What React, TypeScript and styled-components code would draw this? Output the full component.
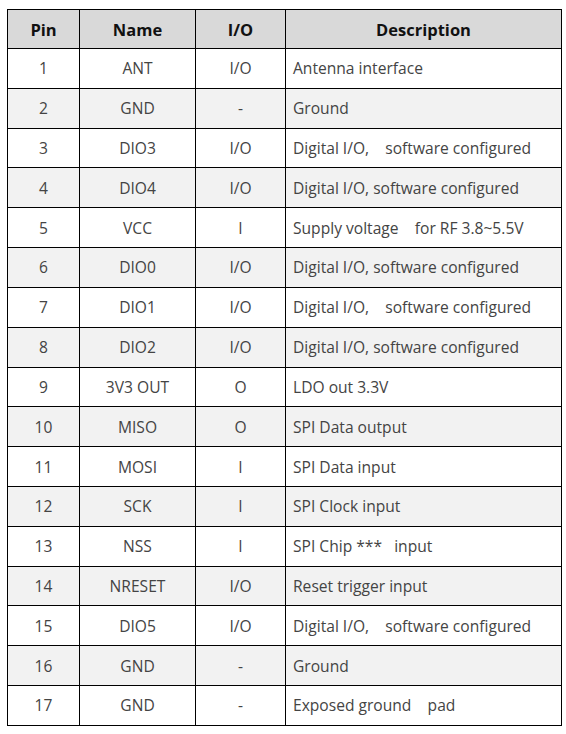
import styled, { createGlobalStyle } from 'styled-components';

const GlobalStyle = createGlobalStyle`
  body {
    margin: 0;
    padding: 9px 0 0 7px;
    background: #ffffff;
    font-family: 'Open Sans', 'Noto Sans', 'Liberation Sans', sans-serif;
  }
`;

const PinTable = styled.table`
  width: 555px;
  border-collapse: collapse;
  table-layout: fixed;
  font-size: 15.6px;
  color: #444444;
`;

const HeadCell = styled.th<{ $width?: number }>`
  ${({ $width }) => ($width ? `width: ${$width}px;` : '')}
  height: 38px;
  padding: 0;
  border: 1px solid #000000;
  background: #d9d9d9;
  color: #111111;
  font-size: 16.5px;
  font-weight: 700;
  text-align: center;
  vertical-align: middle;
`;

const Row = styled.tr<{ $shaded: boolean }>`
  height: 39.82px;
  background: ${({ $shaded }) => ($shaded ? '#f2f2f2' : '#ffffff')};
`;

const Cell = styled.td<{ $left?: boolean }>`
  padding: ${({ $left }) => ($left ? '0 0 0 7px' : '0')};
  border: 1px solid #000000;
  text-align: ${({ $left }) => ($left ? 'left' : 'center')};
  vertical-align: middle;
  white-space: pre;
`;

interface IPin {
  pin: number;
  name: string;
  io: string;
  desc: string;
}

const pins: IPin[] = [
  { pin: 1, name: 'ANT', io: 'I/O', desc: 'Antenna interface' },
  { pin: 2, name: 'GND', io: '-', desc: 'Ground' },
  { pin: 3, name: 'DIO3', io: 'I/O', desc: 'Digital I/O,    software configured' },
  { pin: 4, name: 'DIO4', io: 'I/O', desc: 'Digital I/O, software configured' },
  { pin: 5, name: 'VCC', io: 'I', desc: 'Supply voltage    for RF 3.8~5.5V' },
  { pin: 6, name: 'DIO0', io: 'I/O', desc: 'Digital I/O, software configured' },
  { pin: 7, name: 'DIO1', io: 'I/O', desc: 'Digital I/O,    software configured' },
  { pin: 8, name: 'DIO2', io: 'I/O', desc: 'Digital I/O, software configured' },
  { pin: 9, name: '3V3 OUT', io: 'O', desc: 'LDO out 3.3V' },
  { pin: 10, name: 'MISO', io: 'O', desc: 'SPI Data output' },
  { pin: 11, name: 'MOSI', io: 'I', desc: 'SPI Data input' },
  { pin: 12, name: 'SCK', io: 'I', desc: 'SPI Clock input' },
  { pin: 13, name: 'NSS', io: 'I', desc: 'SPI Chip ***   input' },
  { pin: 14, name: 'NRESET', io: 'I/O', desc: 'Reset trigger input' },
  { pin: 15, name: 'DIO5', io: 'I/O', desc: 'Digital I/O,    software configured' },
  { pin: 16, name: 'GND', io: '-', desc: 'Ground' },
  { pin: 17, name: 'GND', io: '-', desc: 'Exposed ground    pad' },
];

const App = () => {
  return (
    <>
      <GlobalStyle />
      <PinTable>
        <thead>
          <tr>
            <HeadCell $width={71}>Pin</HeadCell>
            <HeadCell $width={115}>Name</HeadCell>
            <HeadCell $width={89}>I/O</HeadCell>
            <HeadCell>Description</HeadCell>
          </tr>
        </thead>
        <tbody>
          {pins.map((p, i) => (
            <Row key={p.pin} $shaded={i % 2 === 1}>
              <Cell>{p.pin}</Cell>
              <Cell>{p.name}</Cell>
              <Cell>{p.io}</Cell>
              <Cell $left>{p.desc}</Cell>
            </Row>
          ))}
        </tbody>
      </PinTable>
    </>
  );
};

export default App;
